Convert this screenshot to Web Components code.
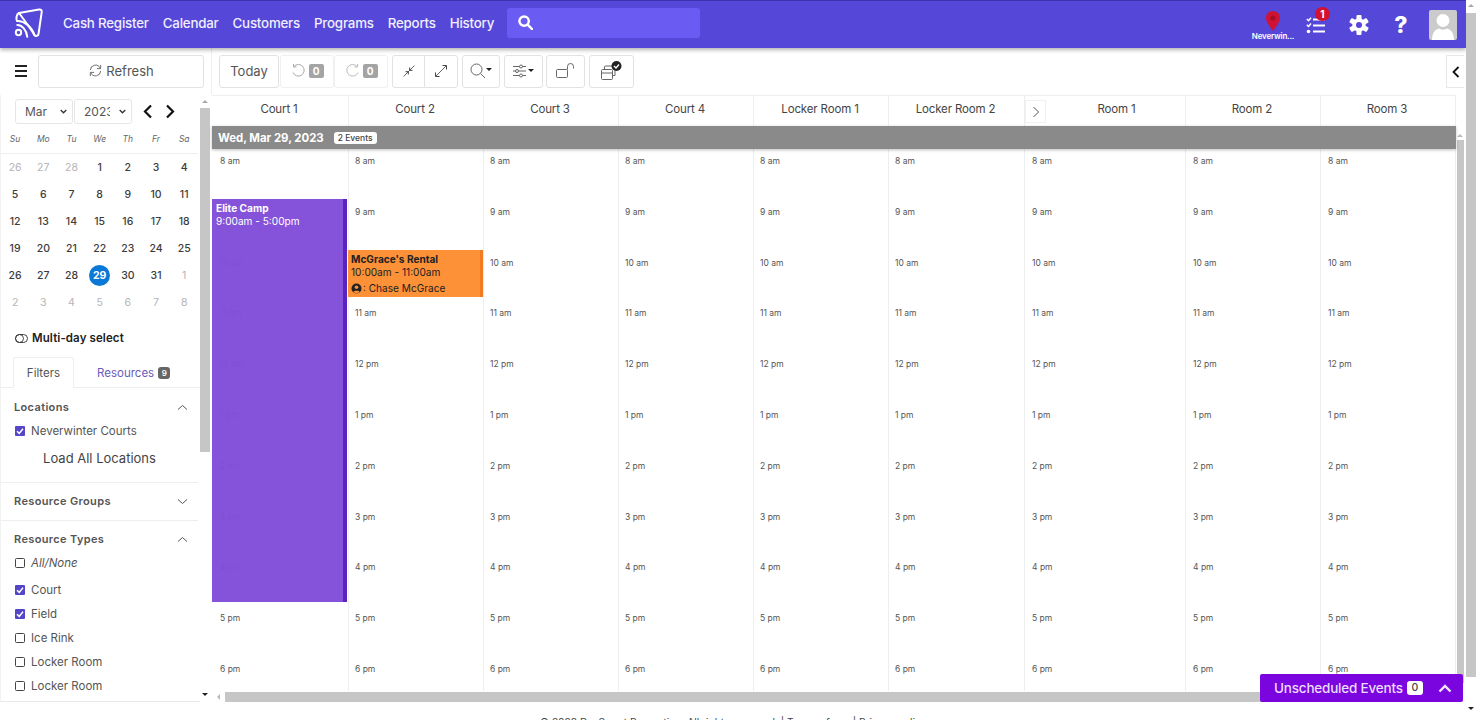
<!DOCTYPE html>
<html lang="en">
<head>
<meta charset="utf-8">
<title>Calendar</title>
<style>
    html, body { margin: 0; height: 720px; overflow: hidden; background: #fff; }
    body { font-family: "Inter", "Liberation Sans", sans-serif; color: #444; }
    #page { display: flex; height: 720px; }
    #page-main { flex: 1; min-width: 0; display: flex; flex-direction: column; height: 720px; overflow: hidden; }
    #content { display: flex; height: 654px; flex: none; }
</style>
</head>
<body>
<div id="page">
    <div id="page-main">
        <app-navbar></app-navbar>
        <div id="content">
            <app-sidebar>
                <mini-calendar></mini-calendar>
            </app-sidebar>
            <cal-view></cal-view>
        </div>
        <app-footer></app-footer>
    </div>
    <page-scrollbar></page-scrollbar>
</div>
<unscheduled-bar></unscheduled-bar>

<script>
class AppNavbar extends HTMLElement {
    constructor() {
        super();
        this.attachShadow({ mode: 'open' });
        const links = ['Cash Register', 'Calendar', 'Customers', 'Programs', 'Reports', 'History'];
        this.shadowRoot.innerHTML = `
            <style>
                :host {
                    display: flex; align-items: center; flex: none; height: 48px; box-sizing: border-box;
                    padding: 0 9px 0 13px; background: #5547d8; border-top: 1px solid #3d32ad;
                    box-shadow: 0 2px 4px rgba(0,0,0,.3); position: relative; z-index: 3; color: #fff;
                }
                .logo { width: 32px; height: 32px; flex: none; margin-right: 18px; margin-bottom: 2px; }
                a { color: #f1effd; font-size: 13.300px; font-weight: 500; margin-right: 14px; margin-bottom: 4px; white-space: nowrap; letter-spacing: -.2px; }
                .search {
                    width: 193px; height: 30px; background: #6a5bf2; border-radius: 3px; margin-left: -1px; margin-bottom: 4px;
                    display: flex; align-items: center; padding-left: 11px; box-sizing: border-box;
                }
                .right { margin-left: auto; display: flex; align-items: center; }
                .loc { width: 44px; display: flex; flex-direction: column; align-items: center; margin-right: 11px; margin-top: 4px; }
                .loc span { font-size: 8px; font-weight: 600; line-height: 11px; letter-spacing: -.2px; white-space: nowrap; }
                .tasks { position: relative; width: 20px; height: 18px; margin-right: 23px; }
                .badge {
                    position: absolute; left: 9px; top: -9px; width: 15px; height: 14px; border-radius: 50%;
                    background: #d3122f; font-size: 10px; font-weight: 700; line-height: 14px; text-align: center;
                }
                .gear { margin-right: 23px; display: block; }
                .help { font-size: 23px; font-weight: 800; line-height: 30px; width: 18px; text-align: center; margin-right: 19px; }
                .avatar { width: 28px; height: 30px; background: #cbcbcb; border-radius: 2px; display: block; }
            </style>
            <svg class="logo" viewBox="0 0 32 32" fill="none" stroke="#fff" stroke-width="2" stroke-linecap="round" stroke-linejoin="round">
                <path d="M6 5 26 1.500c2-.3 3 .8 2.700 2.700L25.500 26c-.3 2-2.700 2.700-4 1.200C18 21 12 13 6 5z"/>
                <path d="M6 5C3.500 6 2.800 10.500 4 13c7-.5 14.500 5.500 17.500 14.200"/>
                <path d="M4.300 17c4.500 0 9 4.500 10 11.800"/>
                <circle cx="5.500" cy="24.500" r="2.700"/>
            </svg>
            ${links.map(l => `<a>${l}</a>`).join('')}
            <div class="search">
                <svg width="15" height="15" viewBox="0 0 16 16" fill="none" stroke="#fff" stroke-width="2.600"><circle cx="6.500" cy="6.500" r="5"/><path d="M10.500 10.500l4.500 4.500" stroke-linecap="round"/></svg>
            </div>
            <div class="right">
                <div class="loc">
                    <svg width="14" height="20" viewBox="0 0 14 20"><path d="M7 0C3 0 0 3 0 7c0 4.500 7 13 7 13s7-8.500 7-13c0-4-3-7-7-7z" fill="#cf1332"/><circle cx="7" cy="7" r="2.600" fill="#a50e28"/></svg>
                    <span>Neverwin...</span>
                </div>
                <div class="tasks">
                    <svg width="20" height="18" viewBox="0 0 20 18" fill="none" stroke="#fff" stroke-width="2"><path d="M7 3.500h12M7 9.500h12M7 15.500h12"/><path d="M.8 3l1.700 1.700L5 1.800M.8 8.800l1.700 1.700L5 7.600" stroke-width="1.500"/><circle cx="2.500" cy="15.500" r="1.800" fill="#fff" stroke="none"/></svg>
                    <div class="badge">1</div>
                </div>
                <svg class="gear" width="20" height="20" viewBox="0 0 20 20">
                    <g fill="#fff">
                        <rect x="7.500" y="0" width="5" height="20" rx="1"/>
                        <rect x="7.500" y="0" width="5" height="20" rx="1" transform="rotate(60 10 10)"/>
                        <rect x="7.500" y="0" width="5" height="20" rx="1" transform="rotate(120 10 10)"/>
                    </g>
                    <circle cx="10" cy="10" r="5" fill="none" stroke="#fff" stroke-width="3.400"/>
                    <circle cx="10" cy="10" r="3" fill="#5547d8"/>
                </svg>
                <div class="help">?</div>
                <svg class="avatar" viewBox="0 0 28 30">
                    <circle cx="14" cy="10.500" r="6.500" fill="#fff"/>
                    <path d="M3 30c0-7 3-10.500 7-11.500 2 1.500 6 1.500 8 0 4 1 7 4.500 7 11.500z" fill="#fff"/>
                </svg>
            </div>
        `;
    }
}

class AppSidebar extends HTMLElement {
    constructor() {
        super();
        this.attachShadow({ mode: 'open' });
        this.shadowRoot.innerHTML = `
            <style>
                :host { display: flex; flex-direction: column; width: 212px; flex: none; height: 654px; box-sizing: border-box; }
                .top { display: flex; align-items: center; height: 47px; flex: none; padding: 0 7px 0 15px; box-sizing: border-box; border-right: 1px solid #eee; }
                .burger { width: 12px; height: 12px; border-top: 2px solid #222; border-bottom: 2px solid #222; box-sizing: border-box; position: relative; margin-right: 11px; margin-bottom: 2px; flex: none; }
                .burger::after { content: ''; position: absolute; left: 0; right: 0; top: 3px; height: 2px; background: #222; }
                .refresh {
                    flex: 1; height: 33px; border: 1px solid #e2e2e2; border-radius: 3px; box-sizing: border-box; padding-bottom: 2px;
                    display: flex; align-items: center; justify-content: center; gap: 3px; font-size: 13px; color: #555;
                }
                .body { flex: 1; display: flex; min-height: 0; }
                .scroll { flex: 1; min-width: 0; overflow: hidden; height: 607px; box-sizing: border-box; border-bottom: 1px solid #e8e8e8; border-left: 1px solid #f2f2f2; }
                .multi { display: flex; align-items: center; gap: 4px; height: 20px; padding-left: 14px; margin-top: 12px; font-size: 11.500px; font-weight: 600; color: #222; letter-spacing: .1px; }
                .tabs { display: flex; height: 31px; margin-top: 9px; border-bottom: 1px solid #eee; box-sizing: border-box; padding-left: 12px; font-size: 11.500px; }
                .tab { display: flex; align-items: center; justify-content: center; height: 31px; box-sizing: border-box; }
                .tab.on { width: 61px; border: 1px solid #eee; border-bottom-color: #fff; border-radius: 3px 3px 0 0; color: #555; }
                .tab.res { margin-left: 23px; color: #6b5cb8; gap: 4px; }
                .tab.res b { background: #666; color: #fff; font-size: 8px; border-radius: 3px; width: 12px; height: 12px; line-height: 12px; text-align: center; font-weight: 600; }
                .load { height: 30px; line-height: 30px; text-align: center; font-size: 13px; color: #444; }
                .spacer { height: 3px; }
                .bar { width: 10px; flex: none; margin-right: 2px; height: 607px; position: relative; }
                .bar i { position: absolute; left: 0; right: 0; top: 13px; height: 344px; background: #c6c6c6; }
                .up, .down { position: absolute; left: 2px; width: 0; height: 0; border-left: 3px solid transparent; border-right: 3px solid transparent; }
                .up { top: 5px; border-bottom: 3px solid #aaa; }
                .down { top: 598px; border-top: 3px solid #222; }
            </style>
            <div class="top">
                <div class="burger"></div>
                <div class="refresh">
                    <svg width="15" height="15" viewBox="0 0 16 16" fill="none" stroke="#666" stroke-width="1"><path d="M2.500 7.500A5.500 5.500 0 0 1 13 5.500M13.500 8.500A5.500 5.500 0 0 1 3 10.500"/><path d="M13.500 2v4h-4M2.500 14v-4h4"/></svg>
                    Refresh
                </div>
            </div>
            <div class="body">
                <div class="scroll">
                    <slot></slot>
                    <div class="multi">
                        <svg width="13" height="9" viewBox="0 0 13 9" fill="none" stroke="#333" stroke-width=".9"><rect x=".5" y=".5" width="12" height="8" rx="4"/><circle cx="4.500" cy="4.500" r="4"/></svg>
                        Multi-day select
                    </div>
                    <div class="tabs">
                        <div class="tab on">Filters</div>
                        <div class="tab res">Resources <b>9</b></div>
                    </div>
                    <filter-section label="Locations" open style="padding: 7px 0 9px">
                        <check-row checked>Neverwinter Courts</check-row>
                        <div class="load">Load All Locations</div>
                    </filter-section>
                    <filter-section label="Resource Groups" style="padding: 6px 0 7px"></filter-section>
                    <filter-section label="Resource Types" open>
                        <check-row italic>All/None</check-row>
                        <div class="spacer"></div>
                        <check-row checked>Court</check-row>
                        <check-row checked>Field</check-row>
                        <check-row>Ice Rink</check-row>
                        <check-row>Locker Room</check-row>
                        <check-row>Locker Room</check-row>
                    </filter-section>
                </div>
                <div class="bar"><span class="up"></span><i></i><span class="down"></span></div>
            </div>
        `;
    }
}

class MiniCalendar extends HTMLElement {
    constructor() {
        super();
        this.attachShadow({ mode: 'open' });
        const heads = ['Su', 'Mo', 'Tu', 'We', 'Th', 'Fr', 'Sa'];
        const days = [];
        [26, 27, 28].forEach(d => days.push({ d, off: true }));
        for (let d = 1; d <= 31; d++) days.push({ d, on: d === 29 });
        [1, 2, 3, 4, 5, 6, 7, 8].forEach(d => days.push({ d, off: true }));
        const caret = `<svg width="7" height="5" viewBox="0 0 7 5" fill="none" stroke="#333" stroke-width="1.300"><path d="M.7 1l2.800 2.800L6.300 1"/></svg>`;
        this.shadowRoot.innerHTML = `
            <style>
                :host { display: block; padding-top: 4px; }
                .nav { display: flex; align-items: center; height: 25px; padding-left: 14px; }
                .sel {
                    height: 25px; box-sizing: border-box; border: 1px solid #e6e6e6; border-radius: 3px;
                    display: flex; align-items: center; justify-content: space-between; padding: 0 5px 0 9px;
                    font-size: 12px; color: #555; overflow: hidden;
                }
                .m { width: 58px; }
                .y { width: 58px; margin-left: 1px; }
                .y span { width: 26px; overflow: hidden; white-space: nowrap; }
                .arrows { display: flex; margin-left: 10px; gap: 12px; }
                .row { display: grid; grid-template-columns: repeat(7, 28.200px); }
                .head { height: 29px; align-items: center; border-bottom: 1px solid #eee; box-sizing: content-box; width: 197px; }
                .head span { text-align: center; font-size: 8.500px; font-style: italic; color: #666; }
                .cell { height: 27px; display: flex; align-items: center; justify-content: center; font-size: 10.500px; color: #3c3c3c; font-weight: 500; }
                .cell.off { color: #b4b4b4; font-weight: 400; }
                .cell.on span { width: 21px; height: 21px; border-radius: 50%; background: #0a78d6; color: #fff; font-weight: 700; text-align: center; line-height: 21px; }
            </style>
            <div class="nav">
                <div class="sel m">Mar ${caret}</div>
                <div class="sel y"><span>2023</span> ${caret}</div>
                <div class="arrows">
                    <svg width="11" height="15" viewBox="0 0 11 15" fill="none" stroke="#111" stroke-width="2.200"><path d="M9 1.500 3 7.500l6 6"/></svg>
                    <svg width="11" height="15" viewBox="0 0 11 15" fill="none" stroke="#111" stroke-width="2.200"><path d="M2 1.500l6 6-6 6"/></svg>
                </div>
            </div>
            <div class="row head">${heads.map(h => `<span>${h}</span>`).join('')}</div>
            <div class="row">${days.map(c => `<div class="cell ${c.off ? 'off' : ''} ${c.on ? 'on' : ''}"><span>${c.d}</span></div>`).join('')}</div>
        `;
    }
}

class FilterSection extends HTMLElement {
    constructor() {
        super();
        this.attachShadow({ mode: 'open' });
    }
    connectedCallback() {
        const open = this.hasAttribute('open');
        const path = open ? 'M1 5.500 5.500 1.500l4.500 4' : 'M1 1.500l4.500 4 4.500-4';
        this.shadowRoot.innerHTML = `
            <style>
                :host { display: block; padding: 6px 0 6px; border-bottom: 1px solid #eee; width: 197px; }
                .h { display: flex; align-items: center; justify-content: space-between; height: 24px; padding: 0 10px 0 13px; font-size: 11px; font-weight: 600; color: #555; letter-spacing: .35px; }
            </style>
            <div class="h">${this.getAttribute('label')}<svg width="11" height="7" viewBox="0 0 11 7" fill="none" stroke="#555" stroke-width="1"><path d="${path}"/></svg></div>
            <slot></slot>
        `;
    }
}

class CheckRow extends HTMLElement {
    constructor() {
        super();
        this.attachShadow({ mode: 'open' });
    }
    connectedCallback() {
        const box = this.hasAttribute('checked')
            ? `<svg width="10" height="10" viewBox="0 0 10 10"><rect width="10" height="10" rx="1" fill="#5546c8"/><path d="M2 5.200l2.200 2.200L8 2.800" fill="none" stroke="#fff" stroke-width="1.500"/></svg>`
            : `<svg width="10" height="10" viewBox="0 0 10 10"><rect x=".5" y=".5" width="9" height="9" rx="1" fill="#fff" stroke="#444"/></svg>`;
        this.shadowRoot.innerHTML = `
            <style>
                :host { display: flex; align-items: center; height: 24px; padding-left: 14px; gap: 6px; font-size: 11.500px; color: #555; font-style: ${this.hasAttribute('italic') ? 'italic' : 'normal'}; white-space: nowrap; }
            </style>
            ${box}<slot></slot>
        `;
    }
}

class CalView extends HTMLElement {
    constructor() {
        super();
        this.attachShadow({ mode: 'open' });
        this.shadowRoot.innerHTML = `
            <style>
                :host { display: flex; flex-direction: column; flex: 1; min-width: 0; height: 654px; }
            </style>
            <cal-toolbar></cal-toolbar>
            <cal-grid></cal-grid>
        `;
    }
}

class CalToolbar extends HTMLElement {
    constructor() {
        super();
        this.attachShadow({ mode: 'open' });
        const s = 'fill="none" stroke="#666" stroke-width="1"';
        const tri = `<path d="M16 5h6l-3 3z" fill="#222" stroke="none"/>`;
        this.shadowRoot.innerHTML = `
            <style>
                :host { display: flex; align-items: center; height: 47px; flex: none; padding-left: 7px; padding-right: 2px; box-sizing: border-box; }
                .btn {
                    height: 33px; box-sizing: border-box; border: 1px solid #e2e2e2; border-radius: 3px; background: #fff; padding-bottom: 2px;
                    display: flex; align-items: center; justify-content: center; font-size: 13px; color: #555; flex: none;
                }
                .btn.faint { border-color: #f0f0f0; }
                .btn svg { display: block; }
                .count { background: #a4a4a4; color: #fff; font-size: 10px; font-weight: 700; width: 15px; height: 14px; line-height: 14px; text-align: center; border-radius: 2px; margin-left: 3px; }
                .undo { width: 54px; }
                .close {
                    margin-left: auto; width: 18px; height: 33px; border: 1px solid #e8e8e8; border-right: 0; box-sizing: border-box;
                    display: flex; align-items: center; justify-content: center;
                }
            </style>
            <div class="btn" style="width:60px">Today</div>
            <div class="btn faint undo" style="margin-left:1px">
                <svg width="15" height="15" viewBox="0 0 15 15" fill="none" stroke="#aaa" stroke-width="1"><path d="M3 3.500A5.800 5.800 0 1 1 2 9.500M2.500 1v3h3"/></svg>
                <div class="count">0</div>
            </div>
            <div class="btn faint undo">
                <svg width="15" height="15" viewBox="0 0 15 15" fill="none" stroke="#bbb" stroke-width="1"><path d="M12 3.500A5.800 5.800 0 1 0 13 9.500M12.500 1v3h-3"/></svg>
                <div class="count">0</div>
            </div>
            <div class="btn" style="width:33px;margin-left:4px;border-radius:3px 0 0 3px">
                <svg width="14" height="14" viewBox="0 0 14 14" ${s}><path d="M1.500 12.500l11-11"/><path d="M7.700 3.500v2.800h2.800M3.500 7.700h2.800v2.800" stroke="#444"/></svg>
            </div>
            <div class="btn" style="width:34px;margin-left:-1px;border-radius:0 3px 3px 0">
                <svg width="14" height="14" viewBox="0 0 14 14" ${s}><path d="M2 12 12 2"/><path d="M8.500 1.500h4v4M1.500 8.500v4h4" stroke="#444"/></svg>
            </div>
            <div class="btn" style="width:38px;margin-left:4px">
                <svg width="23" height="16" viewBox="0 0 23 16" ${s}><circle cx="6.500" cy="6.500" r="5.500"/><path d="M10.500 10.500l4.500 4.500"/>${tri}</svg>
            </div>
            <div class="btn" style="width:39px;margin-left:4px">
                <svg width="23" height="14" viewBox="0 0 23 14" ${s}><path d="M1 2.500h13M1 7h13M1 11.500h13"/><circle cx="9" cy="2.500" r="1.500" fill="#fff"/><circle cx="5" cy="7" r="1.500" fill="#fff"/><circle cx="9" cy="11.500" r="1.500" fill="#fff"/><path d="M16 5h6l-3 3z" fill="#222" stroke="none"/></svg>
            </div>
            <div class="btn" style="width:39px;margin-left:3px">
                <svg width="19" height="15" viewBox="0 0 19 15" ${s}><rect x=".5" y="6.500" width="11" height="8" rx="1"/><path d="M11.500 6.500V3.500a3 3 0 0 1 6 0v2"/></svg>
            </div>
            <div class="btn" style="width:45px;margin-left:4px">
                <svg width="21" height="20" viewBox="0 0 21 20" ${s}><rect x=".5" y="8.500" width="11" height="10" rx="1"/><path d="M.5 12h11M3.500 8.500V6a1 1 0 0 1 1-1h9.500v9.500h-2.500"/><circle cx="15.500" cy="5" r="5" fill="#222" stroke="none"/><path d="M13 5l2 2 3-3.500" stroke="#fff" stroke-width="1.300"/></svg>
            </div>
            <div class="close">
                <svg width="8" height="12" viewBox="0 0 8 12" fill="none" stroke="#111" stroke-width="1.800"><path d="M6.500 1 1.500 6l5 5"/></svg>
            </div>
        `;
    }
}

class CalGrid extends HTMLElement {
    constructor() {
        super();
        this.attachShadow({ mode: 'open' });
        const cols = ['Court 1', 'Court 2', 'Court 3', 'Court 4', 'Locker Room 1', 'Locker Room 2', 'Room 1', 'Room 2', 'Room 3'];
        const hours = ['8 am', '9 am', '10 am', '11 am', '12 pm', '1 pm', '2 pm', '3 pm', '4 pm', '5 pm', '6 pm'];
        // labels directly under an event's title are left out, they can't be seen there
        const hidden = { '0:9 am': true, '1:10 am': true };
        const body = cols.map((c, i) => `<div class="col">${hours.map(h => `<div class="hour">${hidden[i + ':' + h] ? '' : h}</div>`).join('')}</div>`).join('');
        this.shadowRoot.innerHTML = `
            <style>
                :host {
                    --cols: 137px 135px 135px 135px 135px 136px 161px 135px 135px;
                    display: flex; flex-direction: column; flex: 1; min-height: 0; position: relative;
                }
                .heads { display: grid; grid-template-columns: var(--cols); height: 31px; flex: none; border-top: 1px solid #eee; box-sizing: border-box; width: 1244px; }
                .heads div { display: flex; align-items: center; justify-content: center; font-size: 11.500px; letter-spacing: -.15px; color: #444; border-right: 1px solid #eee; box-sizing: border-box; position: relative; padding-bottom: 4px; padding-right: 2px; }
                .heads div:nth-child(7) { padding-left: 25px; }
                .more {
                    position: absolute; left: 0; top: 4px; width: 21px; height: 23px; border: 1px solid #f0f0f0;
                    box-sizing: border-box; display: flex; align-items: center; justify-content: center;
                }
                .day {
                    height: 23px; flex: none; width: 1244px; background: #8a8a8a; color: #fff; display: flex; align-items: center;
                    padding-left: 6px; box-sizing: border-box; font-size: 11.400px; font-weight: 700; box-shadow: 0 1px 3px rgba(0,0,0,.25);
                    position: relative; z-index: 1;
                }
                .day span { margin-left: 10px; background: #fff; color: #444; font-size: 8.500px; font-weight: 500; height: 12px; line-height: 12px; padding: 0 4px; border-radius: 3px; }
                .mid { flex: 1; display: flex; min-height: 0; }
                .body { width: 1244px; flex: none; display: grid; grid-template-columns: var(--cols); height: 542px; overflow: hidden; position: relative; }
                .col { border-right: 1px solid #eee; box-sizing: border-box; }
                .hour { height: 50.800px; box-sizing: border-box; padding: 7px 0 0 6px; font-size: 8.500px; line-height: 10px; color: #555; }
                .col:first-child .hour { padding-left: 8px; }
                .col:nth-child(n+7) .hour { padding-left: 7px; }
                .vbar { width: 7px; margin-left: 1px; position: relative; flex: none; height: 542px; }
                .vbar i { position: absolute; left: 0; right: 0; top: -9px; bottom: 8px; background: #c6c6c6; }
                .vbar b { position: absolute; left: 0; top: -15px; border-left: 3px solid transparent; border-right: 3px solid transparent; border-bottom: 3px solid #bbb; }
                .hbar { height: 10px; flex: none; width: 1244px; position: relative; margin-top: -1px; }
                .hbar i { position: absolute; left: 13px; right: 0; top: 0; bottom: 0; background: #c6c6c6; }
                .hbar b { position: absolute; left: 5px; top: 2px; border-top: 3px solid transparent; border-bottom: 3px solid transparent; border-right: 3px solid #bbb; }
                .event { position: absolute; box-sizing: border-box; font-size: 10.100px; line-height: 13px; padding: 3px 0 0 3px; }
                .elite { left: 0; top: 50px; width: 135px; height: 403px; padding-left: 4px; background: rgba(129,77,216,.97); border-right: 4px solid #5a21c4; color: #fff; }
                .rental { left: 136px; top: 101px; width: 135px; height: 47px; background: #fd9138; border-right: 3px solid #f27a1f; color: #222; }
                .event b { display: block; font-weight: 700; }
                .who { display: flex; align-items: center; gap: 1px; margin-top: 3px; }
            </style>
            <div class="heads">
                ${cols.map((c, i) => `<div>${i === 6 ? `<span class="more"><svg width="8" height="12" viewBox="0 0 8 12" fill="none" stroke="#555" stroke-width="1"><path d="M1.500 1l5 5-5 5"/></svg></span>` : ''}${c}</div>`).join('')}
            </div>
            <div class="day">Wed, Mar 29, 2023 <span>2 Events</span></div>
            <div class="mid">
                <div class="body">
                    ${body}
                    <div class="event elite"><b>Elite Camp</b>9:00am - 5:00pm</div>
                    <div class="event rental"><b>McGrace's Rental</b>10:00am - 11:00am
                        <div class="who">
                            <svg width="11" height="11" viewBox="0 0 11 11"><circle cx="5.500" cy="5.500" r="5" fill="#222"/><circle cx="5.500" cy="4.200" r="1.800" fill="#fd9138"/><path d="M2.300 8.800c.8-1.500 5.600-1.500 6.400 0-.9 1-2 1.400-3.200 1.400s-2.300-.4-3.200-1.400z" fill="#fd9138"/></svg>
                            <span>: Chase McGrace</span>
                        </div>
                    </div>
                </div>
                <div class="vbar"><b></b><i></i></div>
            </div>
            <div class="hbar"><b></b><i></i></div>
        `;
    }
}

class AppFooter extends HTMLElement {
    constructor() {
        super();
        this.attachShadow({ mode: 'open' });
        this.shadowRoot.innerHTML = `
            <style>
                :host { display: block; padding-top: 14px; text-align: center; font-size: 10.200px; color: #444; white-space: nowrap; }
            </style>
            © 2023 DaySmart Recreation. All rights reserved. | Terms of use | Privacy policy
        `;
    }
}

class PageScrollbar extends HTMLElement {
    constructor() {
        super();
        this.attachShadow({ mode: 'open' });
        this.shadowRoot.innerHTML = `
            <style>
                :host { display: flex; flex-direction: column; align-items: stretch; width: 11px; flex: none; height: 720px; padding: 4px 1px 0 0; box-sizing: border-box; }
                .up { height: 9px; display: flex; justify-content: center; }
                .up i { width: 0; height: 0; border-left: 3px solid transparent; border-right: 3px solid transparent; border-bottom: 3px solid #aaa; }
                .thumb { height: 664px; background: #c6c6c6; }
                .down { margin-top: 30px; display: flex; justify-content: center; }
                .down i { width: 0; height: 0; border-left: 3px solid transparent; border-right: 3px solid transparent; border-top: 3px solid #222; }
            </style>
            <div class="up"><i></i></div>
            <div class="thumb"></div>
            <div class="down"><i></i></div>
        `;
    }
}

class UnscheduledBar extends HTMLElement {
    constructor() {
        super();
        this.attachShadow({ mode: 'open' });
        this.shadowRoot.innerHTML = `
            <style>
                :host {
                    position: fixed; left: 1260px; top: 674px; width: 203px; height: 28px; box-sizing: border-box; z-index: 5;
                    background: #7b05df; border-radius: 2px; color: #ecdcff; display: flex; align-items: center; padding-left: 14px;
                    font-size: 13.500px; font-weight: 500; white-space: nowrap; letter-spacing: -.2px;
                }
                span { background: #fff; color: #444; font-size: 10.500px; width: 16px; height: 14px; line-height: 14px; text-align: center; border-radius: 3px; margin-left: 4px; letter-spacing: 0; }
                svg { margin-left: 15px; }
            </style>
            Unscheduled Events <span>0</span>
            <svg width="14" height="9" viewBox="0 0 14 9" fill="none" stroke="#f2e8ff" stroke-width="2.400"><path d="M1.500 7.500 7 2l5.500 5.500"/></svg>
        `;
    }
}

customElements.define('app-navbar', AppNavbar);
customElements.define('app-sidebar', AppSidebar);
customElements.define('mini-calendar', MiniCalendar);
customElements.define('filter-section', FilterSection);
customElements.define('check-row', CheckRow);
customElements.define('cal-view', CalView);
customElements.define('cal-toolbar', CalToolbar);
customElements.define('cal-grid', CalGrid);
customElements.define('app-footer', AppFooter);
customElements.define('page-scrollbar', PageScrollbar);
customElements.define('unscheduled-bar', UnscheduledBar);
</script>
</body>
</html>
